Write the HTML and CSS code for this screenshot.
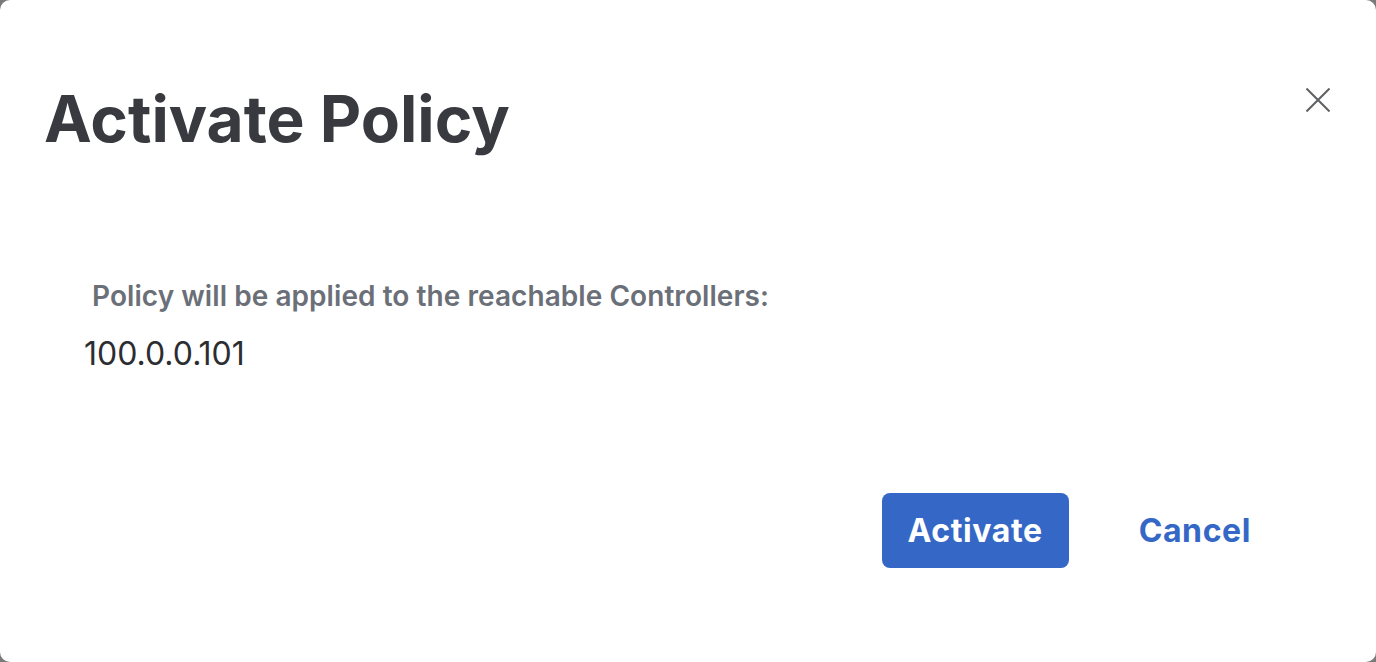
FILE: index.html
```html
<!DOCTYPE html>
<html lang="en">
<head>
<meta charset="utf-8">
<title>Activate Policy</title>
<link rel="stylesheet" href="styles.css">
</head>
<body>
<div class="dialog">
  <header class="dialog-header">
    <h1 class="dialog-title">Activate Policy</h1>
    <button class="close-btn" aria-label="Close">
      <svg width="24" height="24" viewBox="0 0 24 24"><path d="M0.5 0.5L23.5 23.5M23.5 0.5L0.5 23.5" stroke="#5f6063" stroke-width="2" fill="none"/></svg>
    </button>
  </header>
  <section class="dialog-body">
    <p class="body-label">Policy will be applied to the reachable Controllers:</p>
    <p class="body-value">100.0.0.101</p>
  </section>
  <footer class="dialog-footer">
    <button class="btn-primary">Activate</button>
    <button class="btn-link">Cancel</button>
  </footer>
</div>
</body>
</html>
```
FILE: styles.css
```css
* { box-sizing: border-box; }
html, body { margin: 0; padding: 0; }
body {
  background: #7a7a7a;
  font-family: Inter, "Noto Sans", sans-serif;
  width: 1376px;
  height: 662px;
  overflow: hidden;
}
.dialog {
  background: #ffffff;
  width: 1376px;
  height: 662px;
  border-radius: 10px;
  display: flex;
  flex-direction: column;
}
.dialog-header {
  display: flex;
  justify-content: space-between;
  align-items: flex-start;
  padding: 76px 44px 0 44px;
}
.dialog-title {
  margin: 0;
  font-size: 64px;
  font-weight: 700;
  color: #383a40;
  line-height: 86px;
}
.close-btn {
  background: none;
  border: 0;
  padding: 0;
  margin: 12px 2px 0 0;
  width: 24px;
  height: 24px;
  display: flex;
}
.dialog-body {
  padding: 117px 0 0 84px;
}
.body-label {
  margin: 0 0 0 8px;
  font-size: 28px;
  font-weight: 600;
  color: #6b6f78;
  line-height: 34px;
  letter-spacing: 0.06px;
}
.body-value {
  margin: 21px 0 0 0;
  font-size: 32px;
  font-weight: 400;
  color: #2c2d30;
  line-height: 40px;
}
.dialog-footer {
  display: flex;
  justify-content: flex-end;
  align-items: center;
  gap: 70px;
  padding: 119px 125px 0 0;
}
.btn-primary {
  font-family: Inter, "Noto Sans", sans-serif;
  background: #3568c6;
  color: #ffffff;
  border: 0;
  border-radius: 8px;
  width: 187px;
  height: 75px;
  font-size: 32px;
  font-weight: 700;
  letter-spacing: 0.6px;
}
.btn-link {
  font-family: Inter, "Noto Sans", sans-serif;
  background: none;
  border: 0;
  padding: 0;
  color: #3568c6;
  font-size: 32px;
  font-weight: 700;
  letter-spacing: 0.6px;
}
```
